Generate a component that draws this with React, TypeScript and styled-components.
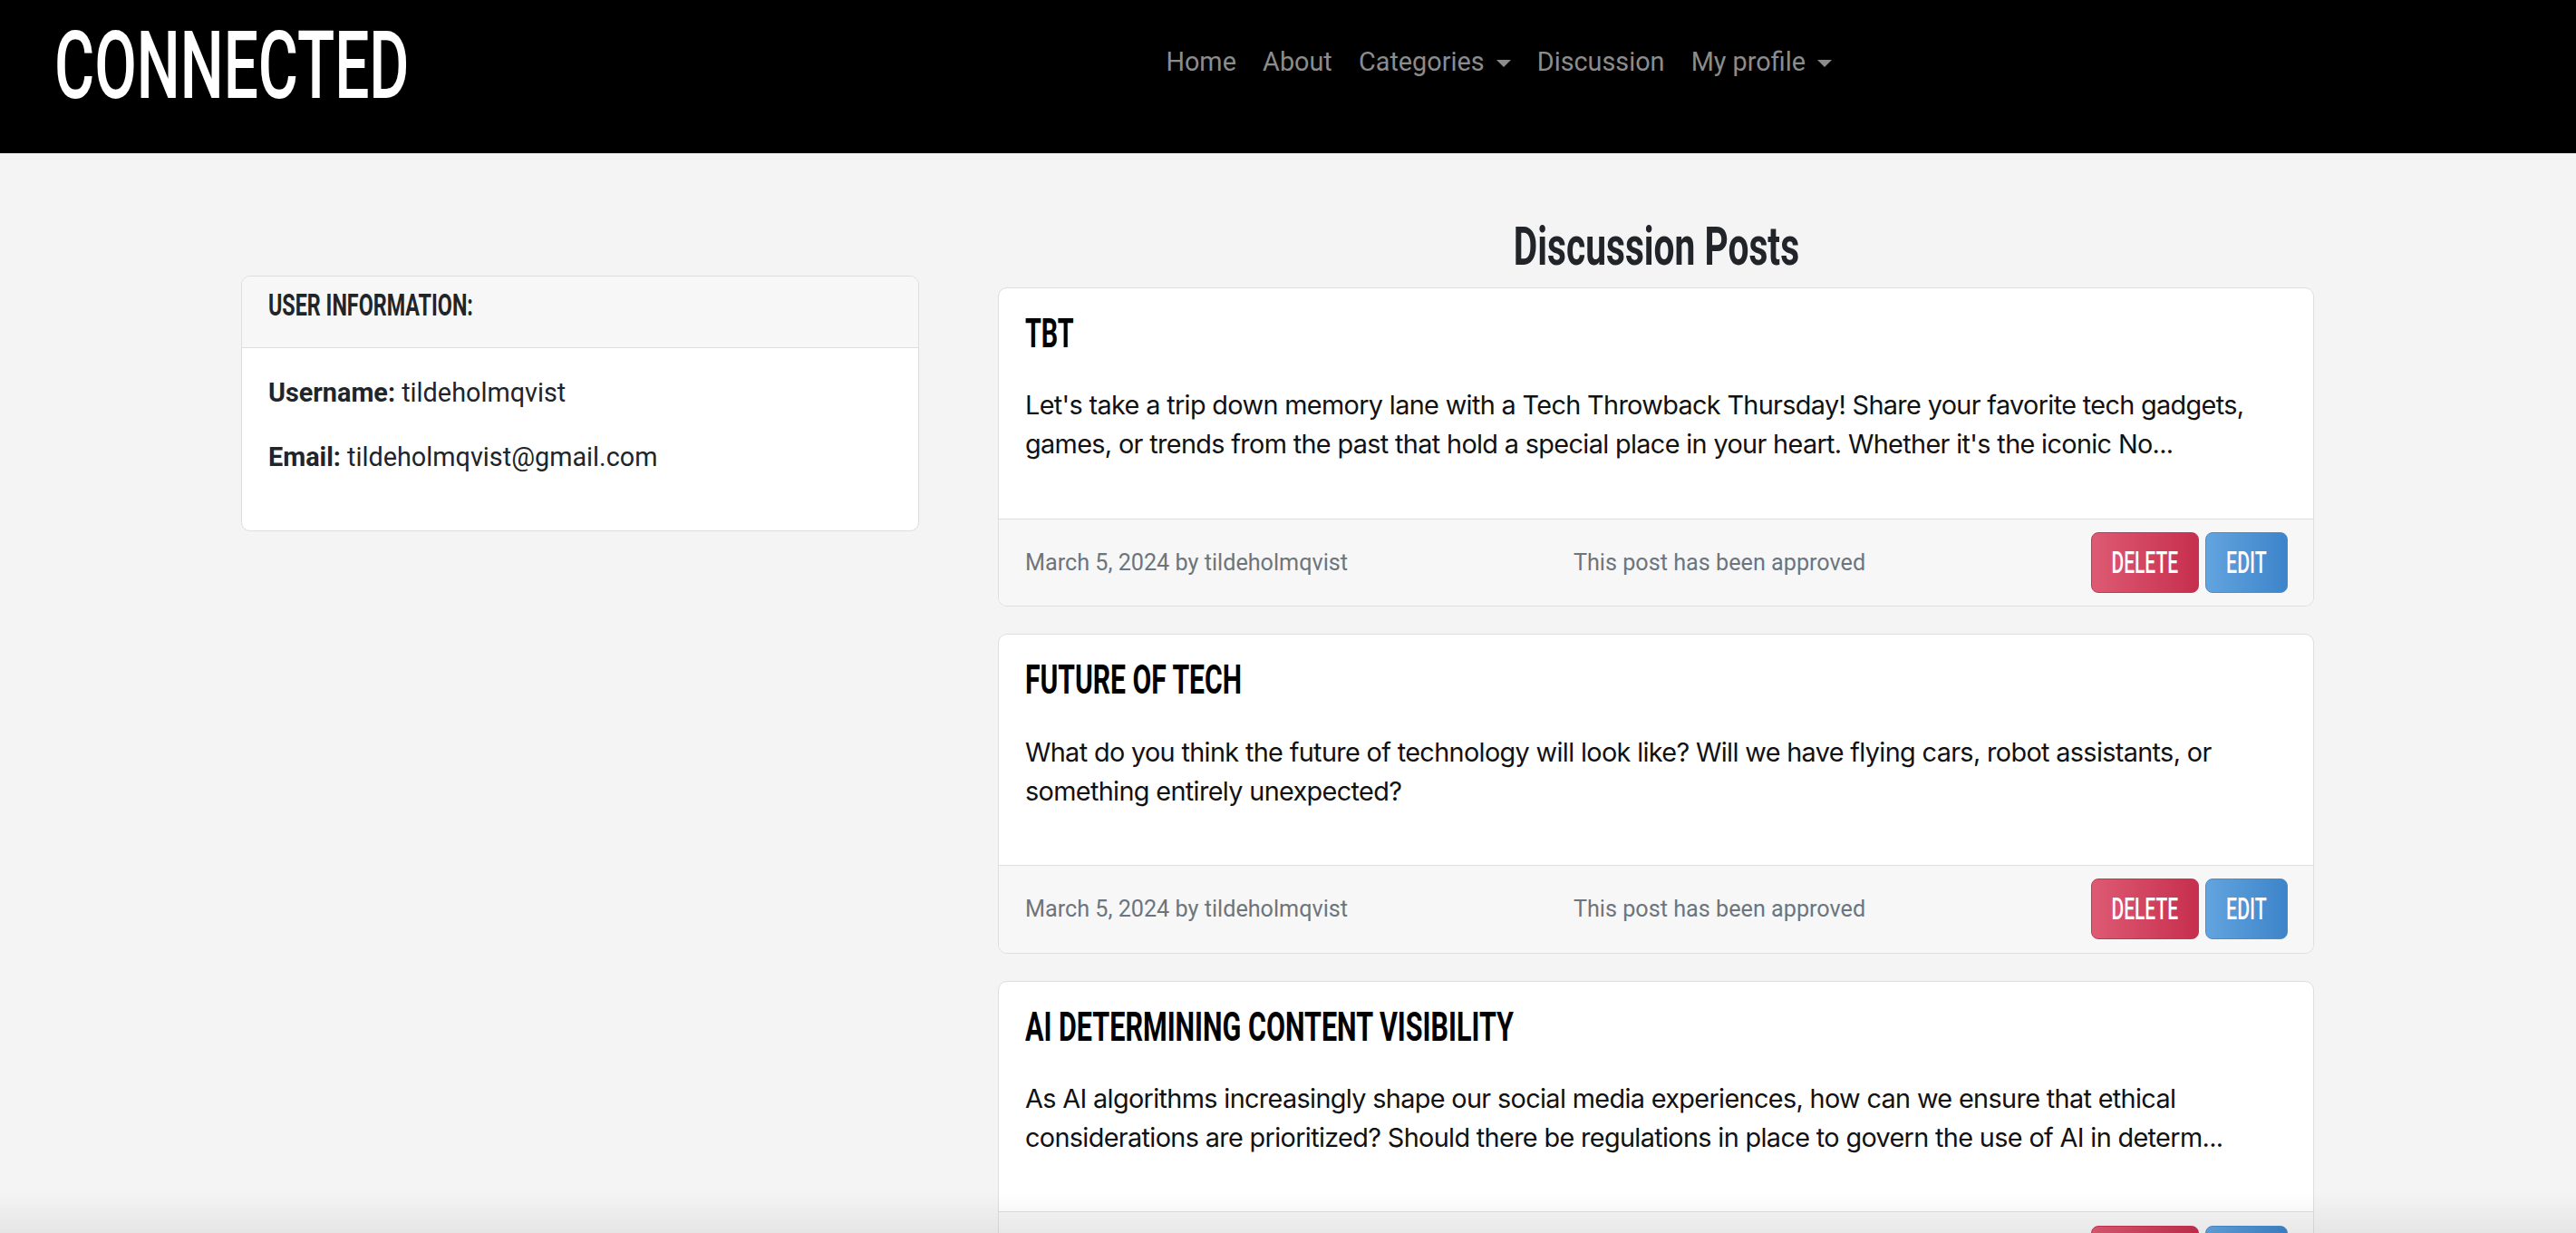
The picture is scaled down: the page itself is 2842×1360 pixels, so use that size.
import React from "react";
import styled, { createGlobalStyle, css } from "styled-components";

const GlobalStyle = createGlobalStyle`
  html { scrollbar-width: none; }
  html::-webkit-scrollbar { display: none; }
  body {
    margin: 0;
    background: #f4f4f4;
    font-family: Roboto, "Liberation Sans", Arial, sans-serif;
    color: #212529;
  }
  * { box-sizing: border-box; }
`;

const Squeeze = styled.span<{ $scale: number; $origin?: string }>`
  display: inline-block;
  white-space: nowrap;
  transform: scaleX(${(p) => p.$scale});
  transform-origin: ${(p) => p.$origin ?? "left center"};
`;

const Header = styled.header`
  height: 169px;
  background: #000;
  display: flex;
  align-items: flex-start;
  padding: 0 226px 0 60px;
`;

const Brand = styled.a`
  flex: 0 0 391px;
  margin-top: 21px;
  margin-right: 29px;
  font-family: Roboto, sans-serif;
  font-size: 104px;
  font-weight: 500;
  line-height: 1;
  color: #fff;
  text-decoration: none;
`;

const Nav = styled.nav`
  display: flex;
  margin: 47px auto 0;
`;

const NavLink = styled.a<{ $dropdown?: boolean }>`
  display: inline-flex;
  align-items: center;
  padding: 0 14.6px;
  font-size: 28.8px;
  line-height: 43.2px;
  color: #8c8c8c;
  text-decoration: none;
  white-space: nowrap;
  ${(p) =>
    p.$dropdown &&
    css`
      &::after {
        content: "";
        display: inline-block;
        margin-left: 13px;
        margin-top: 2px;
        border-top: 8.5px solid #8c8c8c;
        border-left: 8px solid transparent;
        border-right: 8px solid transparent;
      }
    `}
`;

const Main = styled.main`
  display: grid;
  grid-template-columns: 748px 1452px;
  column-gap: 87px;
  margin-left: 266px;
  padding-top: 68px;
  align-items: start;
`;

const InfoCard = styled.section`
  margin-top: 67px;
  background: #fff;
  border: 1px solid #dedede;
  border-radius: 10px;
  overflow: hidden;
`;

const InfoHeader = styled.div`
  background: #f7f7f7;
  border-bottom: 1px solid #dedede;
  padding: 12px 29px 25px;
`;

const InfoTitle = styled.h5`
  margin: 0;
  font-size: 33.8px;
  font-weight: 700;
  line-height: 40.6px;
  color: #212529;
`;

const InfoBody = styled.div`
  padding: 28px 29px 31px;
`;

const InfoRow = styled.p`
  margin: 0 0 28px;
  font-size: 28.8px;
  line-height: 43.2px;
  color: #212529;
  strong { font-weight: 700; }
`;

const Column = styled.div`
  display: flex;
  flex-direction: column;
`;

const PageTitle = styled.h2`
  margin: 0 0 9px;
  text-align: center;
  font-size: 59px;
  font-weight: 700;
  line-height: 70.8px;
  color: #212529;
`;

const PostList = styled.div`
  display: flex;
  flex-direction: column;
  gap: 30px;
`;

const PostCard = styled.article`
  background: #fff;
  border: 1px solid #dedede;
  border-radius: 10px;
  overflow: hidden;
`;

const PostBody = styled.div`
  padding: 25px 22px 31px 29px;
`;

const PostTitle = styled.h5`
  margin: 0 0 30px;
  font-size: 43.6px;
  font-weight: 700;
  line-height: 52.3px;
  color: #000;
`;

const PostText = styled.p`
  margin: 0 0 29px;
  font-family: Inter, "Noto Sans", sans-serif;
  font-size: 28.8px;
  letter-spacing: -0.64px;
  line-height: 43.2px;
  color: #111;
`;

const PostFooter = styled.div`
  display: flex;
  justify-content: space-between;
  align-items: center;
  padding: 14.4px 28px 14.4px 29px;
  background: #f7f7f7;
  border-top: 1px solid #dedede;
`;

const Meta = styled.span`
  font-size: 25.2px;
  color: #6c757d;
`;

const Actions = styled.div`
  display: flex;
  gap: 7px;
`;

const ActionButton = styled.button<{ $variant: "delete" | "edit" }>`
  height: 67px;
  width: ${(p) => (p.$variant === "delete" ? "119px" : "91px")};
  padding: 0;
  display: flex;
  align-items: center;
  justify-content: center;
  border-radius: 8px;
  font-family: Roboto, sans-serif;
  font-size: 33.8px;
  font-weight: 500;
  color: #fff;
  cursor: pointer;
  ${(p) =>
    p.$variant === "delete"
      ? css`
          background: linear-gradient(90deg, #de5a73 0%, #c62f4e 100%);
          border: 1px solid #c63652;
        `
      : css`
          background: linear-gradient(90deg, #62a4de 0%, #3d84ca 100%);
          border: 1px solid #4a8ccd;
        `}
`;

const BottomFade = styled.div`
  position: fixed;
  left: 0;
  right: 0;
  bottom: 0;
  height: 44px;
  pointer-events: none;
  background: linear-gradient(to bottom, rgba(0, 0, 0, 0) 0%, rgba(0, 0, 0, 0.06) 100%);
`;

type Post = { title: string; text: string; scale: number };

const posts: Post[] = [
  {
    title: "TBT",
    scale: 0.66,
    text:
      "Let's take a trip down memory lane with a Tech Throwback Thursday! Share your favorite tech gadgets, games, or trends from the past that hold a special place in your heart. Whether it's the iconic No...",
  },
  {
    title: "FUTURE OF TECH",
    scale: 0.69,
    text:
      "What do you think the future of technology will look like? Will we have flying cars, robot assistants, or something entirely unexpected?",
  },
  {
    title: "AI DETERMINING CONTENT VISIBILITY",
    scale: 0.7,
    text:
      "As AI algorithms increasingly shape our social media experiences, how can we ensure that ethical considerations are prioritized? Should there be regulations in place to govern the use of AI in determ...",
  },
];

export default function App() {
  return (
    <>
      <GlobalStyle />
      <Header>
        <Brand href="#">
          <Squeeze $scale={0.65}>CONNECTED</Squeeze>
        </Brand>
        <Nav>
          <NavLink href="#">Home</NavLink>
          <NavLink href="#">About</NavLink>
          <NavLink href="#" $dropdown>
            Categories
          </NavLink>
          <NavLink href="#">Discussion</NavLink>
          <NavLink href="#" $dropdown>
            My profile
          </NavLink>
        </Nav>
      </Header>
      <Main>
        <InfoCard>
          <InfoHeader>
            <InfoTitle>
              <Squeeze $scale={0.69}>USER INFORMATION:</Squeeze>
            </InfoTitle>
          </InfoHeader>
          <InfoBody>
            <InfoRow>
              <strong>Username:</strong> tildeholmqvist
            </InfoRow>
            <InfoRow>
              <strong>Email:</strong> tildeholmqvist@gmail.com
            </InfoRow>
          </InfoBody>
        </InfoCard>
        <Column>
          <PageTitle>
            <Squeeze $scale={0.69} $origin="center">
              Discussion Posts
            </Squeeze>
          </PageTitle>
          <PostList>
            {posts.map((post) => (
              <PostCard key={post.title}>
                <PostBody>
                  <PostTitle>
                    <Squeeze $scale={post.scale}>{post.title}</Squeeze>
                  </PostTitle>
                  <PostText>{post.text}</PostText>
                </PostBody>
                <PostFooter>
                  <Meta>March 5, 2024 by tildeholmqvist</Meta>
                  <Meta>This post has been approved</Meta>
                  <Actions>
                    <ActionButton $variant="delete">
                      <Squeeze $scale={0.62} $origin="center">
                        DELETE
                      </Squeeze>
                    </ActionButton>
                    <ActionButton $variant="edit">
                      <Squeeze $scale={0.63} $origin="center">
                        EDIT
                      </Squeeze>
                    </ActionButton>
                  </Actions>
                </PostFooter>
              </PostCard>
            ))}
          </PostList>
        </Column>
      </Main>
      <BottomFade />
    </>
  );
}
